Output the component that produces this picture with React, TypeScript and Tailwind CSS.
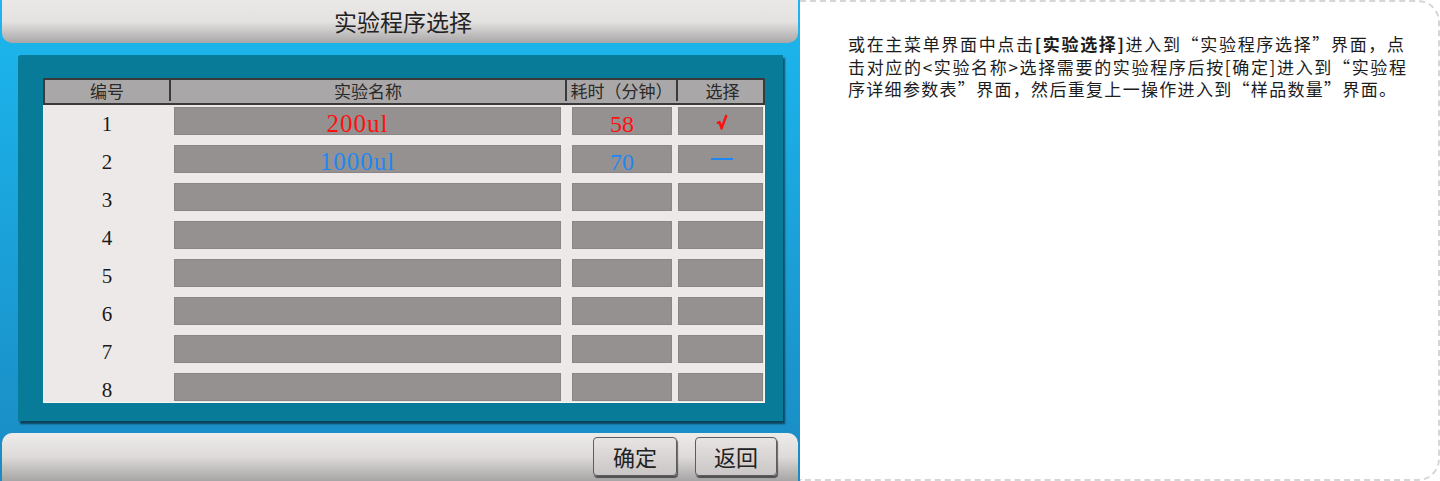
import React from 'react';

type Row = { no: number; name?: string; time?: string; sel?: 'check' | 'dash'; color?: string };

const rows: Row[] = [
  { no: 1, name: '200ul', time: '58', sel: 'check', color: 'text-[#ff1010]' },
  { no: 2, name: '1000ul', time: '70', sel: 'dash', color: 'text-[#1e88f2]' },
  { no: 3 },
  { no: 4 },
  { no: 5 },
  { no: 6 },
  { no: 7 },
  { no: 8 },
];

const cjk = { fontFamily: '"Noto Sans CJK SC", "Noto Sans", sans-serif' };
const serif = { fontFamily: '"Liberation Serif", serif' };

const Box = ({ className, children }: { className: string; children?: React.ReactNode }) => (
  <div
    className={`flex h-[28px] items-center justify-center border border-[#8a8686] bg-[#959191] leading-none ${className}`}>
    {children}
  </div>
);

const Button = ({ label, className }: { label: string; className: string }) => (
  <button
    style={cjk}
    className={`flex h-[39px] items-center justify-center rounded-[4px] border border-[#5e5c5c] bg-gradient-to-b from-[#e8e4e4] to-[#cac6c6] text-[22px] text-[#222] shadow-[1px_2px_1px_rgba(0,0,0,0.55)] ${className}`}>
    {label}
  </button>
);

const Check = () => (
  <svg width="12" height="17" viewBox="0 0 12 17" className="mt-[2px]">
    <path d="M1 9.5 L3.5 8 L5.5 14.5 L10.5 1" fill="none" stroke="#ff1010" strokeWidth="2.4" strokeLinejoin="round" />
  </svg>
);

const Panel = () => (
  <div className="flex h-full w-[800px] shrink-0 flex-col bg-gradient-to-b from-[#1cb7ef] to-[#1a8bc3]">
    {/* title bar */}
    <div
      style={cjk}
      className="mx-[2px] flex h-[43px] shrink-0 items-center justify-center rounded-b-[10px] bg-gradient-to-b from-[#ebe8e8] via-[#e4e1e1] to-[#a9a7a7] pl-[6px] text-[23px] text-[#222]">
      实验程序选择
    </div>

    {/* teal frame */}
    <div className="mt-[12px] mr-[17px] ml-[18px] shrink-0 rounded-tl-[3px] bg-[#087b98] pt-[23px] pr-[18px] pb-[18px] pl-[25px] shadow-[2px_3px_2px_rgba(0,0,0,0.55)]">
      <div className="w-[722px]">
        <div
          style={cjk}
          className="grid h-[27px] grid-cols-[126px_396px_111px_89px] border-2 border-[#3a3a3a] bg-[#a9a7a7] pb-[2px] text-[17px] leading-none text-[#2a2a2a]">
          <div className="flex items-center justify-center border-r-2 border-[#3a3a3a]">编号</div>
          <div className="flex items-center justify-center border-r-2 border-[#3a3a3a]">实验名称</div>
          <div className="flex items-center justify-center border-r-2 border-[#3a3a3a]">耗时（分钟）</div>
          <div className="flex items-center justify-center">选择</div>
        </div>
        <div className="flex flex-col gap-[10px] border border-t-0 border-[#faf6f6] bg-[#eee9e9] pt-[2px] pb-[1px]">
          {rows.map((r) => (
            <div key={r.no} className="grid h-[28px] grid-cols-[126px_396px_111px_89px]">
              <div
                style={serif}
                className="flex h-[28px] items-center justify-center pt-[7px] text-[21px] leading-none text-[#1a1a1a]">
                {r.no}
              </div>
              <Box className="mr-[5px] ml-[4px] pr-[20px]">
                <span style={serif} className={`pt-[4px] text-[25px] tracking-[1px] ${r.color ?? ''}`}>
                  {r.name}
                </span>
              </Box>
              <Box className="mr-[5px] ml-[6px]">
                <span style={serif} className={`pt-[5px] text-[24px] ${r.color ?? ''}`}>
                  {r.time}
                </span>
              </Box>
              <Box className="mr-[3px] ml-[1px] pl-[2px]">
                {r.sel === 'check' && <Check />}
                {r.sel === 'dash' && <div className="h-[2px] w-[22px] bg-[#1e88f2]" />}
              </Box>
            </div>
          ))}
        </div>
      </div>
    </div>

    {/* bottom bar */}
    <div className="mx-[2px] mt-auto flex h-[48px] shrink-0 items-start justify-end gap-[18px] rounded-t-[10px] bg-gradient-to-b from-[#eeebeb] via-[#dedada] to-[#a7a5a5] pt-[4px] pr-[21px]">
      <Button label="确定" className="w-[84px]" />
      <Button label="返回" className="w-[82px]" />
    </div>
  </div>
);

const Line = ({ w, children }: { w: string; children: React.ReactNode }) => (
  <div className={`${w} text-justify whitespace-nowrap [text-align-last:justify]`}>{children}</div>
);

export default function App() {
  return (
    <div className="flex h-[481px] w-[1440px] overflow-hidden bg-white">
      <Panel />
      <div className="h-full flex-1 rounded-r-[22px] border-y-2 border-r-2 border-dashed border-[#d6d6d6] pt-[31px] pl-[48px]">
        <div style={cjk} className="text-[17px] leading-[22.5px] text-[#1c1c1c]">
          <Line w="w-[556px]">
            或在主菜单界面中点击<span className="font-bold">[实验选择]</span>进入到“实验程序选择”界面，点
          </Line>
          <Line w="w-[558px]">击对应的&lt;实验名称&gt;选择需要的实验程序后按[确定]进入到“实验程</Line>
          <Line w="w-[548px]">序详细参数表”界面，然后重复上一操作进入到“样品数量”界面。</Line>
        </div>
      </div>
    </div>
  );
}
